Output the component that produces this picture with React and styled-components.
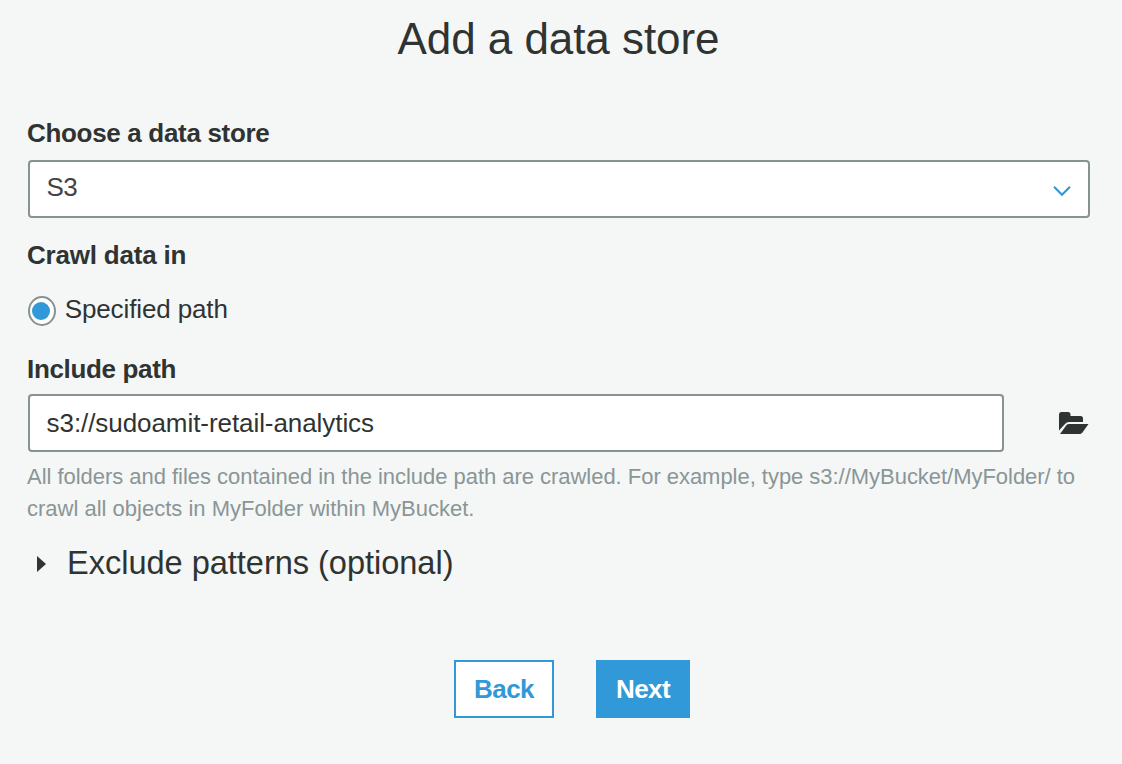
import React from "react";
import styled, { createGlobalStyle } from "styled-components";

const GlobalStyle = createGlobalStyle`
  *, *::before, *::after { box-sizing: border-box; }
  html, body { margin: 0; background: #f4f7f6; }
  body {
    font-family: "Liberation Sans", Arial, sans-serif;
    font-size: 26px;
    color: #2f3332;
  }
`;

const Page = styled.main`
  display: flex;
  flex-direction: column;
  width: 1122px;
  height: 764px;
  padding: 9px 32px 0 26px;
  background: #f4f7f6;
  overflow: hidden;
`;

const Title = styled.h1`
  margin: 0 0 48px;
  padding-left: 1px;
  font-size: 44px;
  font-weight: 400;
  line-height: 60px;
  letter-spacing: -0.06px;
  text-align: center;
`;

const Field = styled.section`
  display: flex;
  flex-direction: column;
  margin-bottom: ${(p) => p.$gap || 0}px;
`;

const Label = styled.label`
  padding-left: 1px;
  margin-bottom: ${(p) => p.$gap}px;
  font-weight: 700;
  line-height: 32px;
  letter-spacing: ${(p) => p.$track || 0}px;
`;

const Select = styled.div`
  display: flex;
  align-items: center;
  justify-content: space-between;
  height: 58px;
  margin-left: 2px;
  padding: 0 17px 0 16.5px;
  border: 2px solid #879293;
  border-radius: 4px;
  background: #fff;
`;

const SelectValue = styled.span`
  padding-bottom: 4px;
  color: #444;
  letter-spacing: -0.6px;
`;

const Chevron = styled.svg`
  width: 18px;
  height: 12px;
  margin-top: 4px;
`;

const RadioRow = styled.div`
  display: flex;
  align-items: flex-start;
  gap: 8.7px;
  padding-left: 2px;
  line-height: 32px;
  letter-spacing: -0.12px;
`;

const Radio = styled.span`
  display: flex;
  align-items: center;
  justify-content: center;
  width: 28px;
  height: 30px;
  margin-top: 3px;
  border: 2px solid #879293;
  border-radius: 50%;
  background: #fff;
`;

const RadioDot = styled.span`
  width: 18px;
  height: 18px;
  margin-right: 2px;
  border-radius: 50%;
  background: #3199d8;
`;

const PathRow = styled.div`
  display: flex;
  align-items: center;
  gap: 55px;
  padding-left: 2px;
`;

const PathInput = styled.div`
  display: flex;
  align-items: center;
  width: 976px;
  height: 58px;
  padding: 0 16.6px;
  border: 2px solid #879293;
  border-radius: 4px;
  background: #fff;
  letter-spacing: -0.07px;
`;

const Folder = styled.svg`
  width: 30px;
  height: 22px;
`;

const Help = styled.p`
  margin: 9px 0 18px;
  padding-left: 1px;
  font-size: 22px;
  line-height: 32px;
  letter-spacing: ${(p) => p.$track || 0}px;
  color: #8a9596;
  white-space: nowrap;
`;

const HelpLine = styled.span`
  display: block;
  letter-spacing: ${(p) => p.$track || 0}px;
`;

const Disclosure = styled.div`
  display: flex;
  align-items: center;
  gap: 21px;
  height: 40px;
  padding-left: 11px;
  font-size: 32.6px;
  line-height: 40px;
  letter-spacing: -0.04px;
`;

const Caret = styled.svg`
  width: 9px;
  height: 16px;
  margin-top: 2px;
`;

const Actions = styled.footer`
  display: flex;
  gap: 42px;
  margin-top: 77px;
  padding-left: 428px;
`;

const Button = styled.button`
  width: ${(p) => p.$width}px;
  height: 58px;
  padding: 0;
  border: 2px solid #3199d8;
  background: ${(p) => (p.$primary ? "#3199d8" : "#fff")};
  color: ${(p) => (p.$primary ? "#fff" : "#3199d8")};
  font: 700 26px/54px "Liberation Sans", Arial, sans-serif;
  letter-spacing: -0.6px;
`;

export default function App() {
  return (
    <>
      <GlobalStyle />
      <Page>
        <Title>Add a data store</Title>
        <Field $gap={21}>
          <Label $gap={11} $track={-0.32}>Choose a data store</Label>
          <Select>
            <SelectValue>S3</SelectValue>
            <Chevron viewBox="0 0 18 12" fill="none" stroke="#3199d8" strokeWidth="2.2">
              <path d="M1 1.8 9 9.8 17 1.8" />
            </Chevron>
          </Select>
        </Field>
        <Field $gap={27}>
          <Label $gap={22} $track={-0.2}>Crawl data in</Label>
          <RadioRow>
            <Radio><RadioDot /></Radio>
            <span>Specified path</span>
          </RadioRow>
        </Field>
        <Field>
          <Label $gap={9} $track={-0.34}>Include path</Label>
          <PathRow>
            <PathInput>s3://sudoamit-retail-analytics</PathInput>
            <Folder viewBox="0 0 30 22" fill="#2f3332">
              <path d="M0 18.6V2.500Q0 0 2.500 0H9Q11.500 0 11.500 2.500V4H21.500Q24 4 24 6.500V10H10Q7.500 10 6 12Z" />
              <path d="M1 22 7.400 13.300Q8.400 12 10 12H29.500L23.400 20.400Q22.200 22 20.500 22Z" />
            </Folder>
          </PathRow>
          <Help>
            <HelpLine $track={-0.033}>
              All folders and files contained in the include path are crawled. For example, type s3://MyBucket/MyFolder/ to
            </HelpLine>
            <HelpLine>crawl all objects in MyFolder within MyBucket.</HelpLine>
          </Help>
        </Field>
        <Disclosure>
          <Caret viewBox="0 0 9 16" fill="#2f3332"><path d="M0 0 9 8 0 16Z" /></Caret>
          <span>Exclude patterns (optional)</span>
        </Disclosure>
        <Actions>
          <Button $width={100}>Back</Button>
          <Button $width={94} $primary>Next</Button>
        </Actions>
      </Page>
    </>
  );
}
